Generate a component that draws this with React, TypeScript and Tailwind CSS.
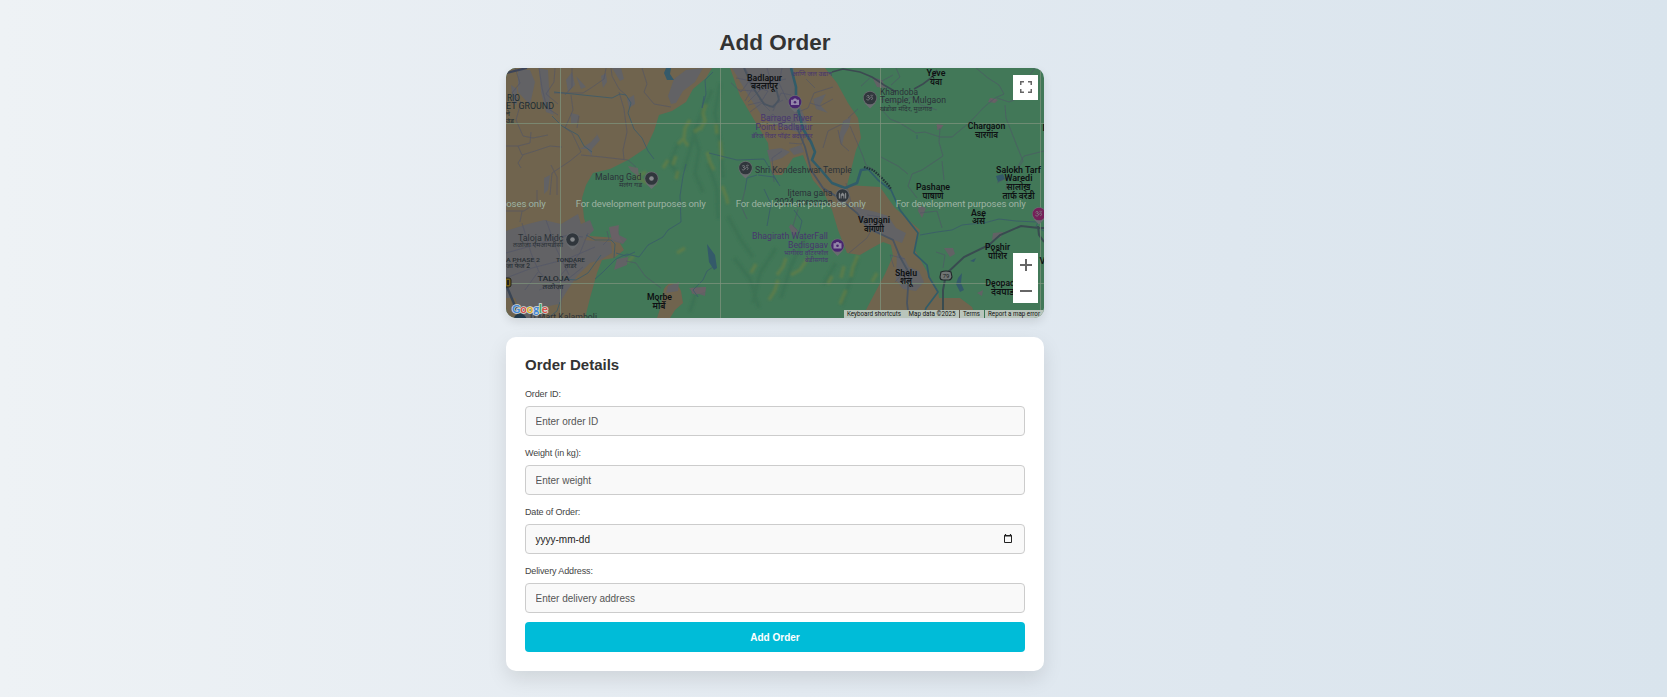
import React from "react";

type Anchor = "start" | "middle" | "end";
type Label = {
  x: number;
  y: number;
  text: string;
  w?: number;
  size?: number;
  anchor?: Anchor;
  kind?: "town" | "poi" | "purple" | "area" | "district";
};

const COLORS = {
  town: "#0e1113",
  poi: "#2b3238",
  purple: "#48366f",
  area: "#1c2c33",
  district: "#262e33",
};

const LABELS: Label[] = [
  { x: 1, y: 32.5, text: "RIO", w: 13, size: 8.6, anchor: "start", kind: "area" },
  { x: 0, y: 41, text: "ET GROUND", w: 48, size: 8.6, anchor: "start", kind: "area" },
  { x: 0, y: 48, text: "ने", size: 7, anchor: "start", kind: "area" },
  { x: 0, y: 55, text: "उंड", w: 8, size: 7, anchor: "start", kind: "area" },
  { x: 89, y: 112, text: "Malang Gad", w: 46.5, anchor: "start", kind: "poi" },
  { x: 113, y: 118.5, text: "मलंग गड", w: 23, size: 7, anchor: "start", kind: "poi" },
  { x: 258.5, y: 12.5, text: "Badlapur", w: 35, kind: "town" },
  { x: 258.5, y: 21, text: "बदलापूर", w: 27, size: 9, kind: "town" },
  { x: 286, y: 8, text: "आणि जल उद्यान", w: 40, size: 7, anchor: "start", kind: "purple" },
  { x: 306.5, y: 53, text: "Barrage River", w: 52, anchor: "end", kind: "purple" },
  { x: 306.5, y: 62, text: "Point Badlapur", w: 57, anchor: "end", kind: "purple" },
  { x: 306.5, y: 69.5, text: "बॅरेज रिवर पॉइंट बदलापूर", w: 61, size: 7, anchor: "end", kind: "purple" },
  { x: 249, y: 104.5, text: "Shri Kondeshwar Temple", w: 97, anchor: "start", kind: "poi" },
  { x: 281.5, y: 128, text: "Ijtema gaha", w: 45, anchor: "start", kind: "poi" },
  { x: 268.5, y: 136.5, text: "2024 goregaon", w: 58, anchor: "start", kind: "poi" },
  { x: 430, y: 8, text: "Yeve", w: 19, kind: "town" },
  { x: 430, y: 16.5, text: "येवा", w: 12, size: 9, kind: "town" },
  { x: 374, y: 26.5, text: "Khandoba", w: 38, anchor: "start", kind: "poi" },
  { x: 374, y: 35, text: "Temple, Mulgaon", w: 66, anchor: "start", kind: "poi" },
  { x: 374, y: 42.5, text: "खंडोबा मंदिर, मुळगाव", w: 52, size: 7, anchor: "start", kind: "poi" },
  { x: 480.5, y: 61, text: "Chargaon", w: 37.5, kind: "town" },
  { x: 480.5, y: 69.5, text: "चारगांव", w: 23, size: 9, kind: "town" },
  { x: 427, y: 122, text: "Pashane", w: 34, kind: "town" },
  { x: 427, y: 130.5, text: "पाषाणे", w: 21, size: 9, kind: "town" },
  { x: 512.5, y: 104.5, text: "Salokh Tarf", w: 45, kind: "town" },
  { x: 512.5, y: 113, text: "Waredi", w: 28, kind: "town" },
  { x: 512.5, y: 122, text: "सालोख", w: 24, size: 9, kind: "town" },
  { x: 512.5, y: 130.5, text: "तार्फ वरेडी", w: 32, size: 9, kind: "town" },
  { x: 472.5, y: 147.5, text: "Ase", w: 15, kind: "town" },
  { x: 472.5, y: 156, text: "असे", w: 13, size: 9, kind: "town" },
  { x: 368, y: 155, text: "Vangani", w: 32, kind: "town" },
  { x: 368, y: 163.5, text: "वांगणी", w: 20, size: 9, kind: "town" },
  { x: 491.5, y: 182, text: "Poshir", w: 25, kind: "town" },
  { x: 491.5, y: 190.5, text: "पोशिर", w: 19, size: 9, kind: "town" },
  { x: 400, y: 207.5, text: "Shelu", w: 22, kind: "town" },
  { x: 400, y: 216, text: "शेलू", w: 12, size: 9, kind: "town" },
  { x: 479.5, y: 218, text: "Deopada", w: 34, anchor: "start", kind: "town" },
  { x: 485, y: 226.5, text: "देवपाडा", w: 26, size: 9, anchor: "start", kind: "town" },
  { x: 536.5, y: 63, text: "D", anchor: "start", kind: "town" },
  { x: 533.5, y: 196, text: "V", anchor: "start", kind: "town" },
  { x: 322, y: 171, text: "Bhagirath WaterFall", w: 76, anchor: "end", kind: "purple" },
  { x: 322, y: 179.5, text: "Bedisgaav", w: 40, anchor: "end", kind: "purple" },
  { x: 322, y: 186.5, text: "भागीरथ वॉटरफॉल", w: 44, size: 7, anchor: "end", kind: "purple" },
  { x: 322, y: 193.5, text: "बेडीसगांव", w: 23, size: 7, anchor: "end", kind: "purple" },
  { x: 12, y: 172.5, text: "Taloja Midc", w: 45.5, anchor: "start", kind: "poi" },
  { x: 7, y: 179, text: "तळोजा एमआयडीसी", w: 50, size: 7, anchor: "start", kind: "poi" },
  { x: 0, y: 194, text: "A PHASE 2", w: 34, size: 6, anchor: "start", kind: "district" },
  { x: 0, y: 200, text: "जा फेज 2", w: 24, size: 6.5, anchor: "start", kind: "district" },
  { x: 64.5, y: 194, text: "TONDARE", w: 29, size: 6, kind: "district" },
  { x: 64.5, y: 200, text: "तोंडरे", w: 12, size: 6.5, kind: "district" },
  { x: 47.5, y: 213, text: "TALOJA", w: 32, size: 8, kind: "district" },
  { x: 47, y: 220.5, text: "तळोजा", w: 21, size: 7, kind: "district" },
  { x: 153.5, y: 232, text: "Morbe", w: 25, kind: "town" },
  { x: 153, y: 240.5, text: "मोर्बे", w: 13, size: 9, kind: "town" },
  { x: 24, y: 252, text: "D Mart Kalamboli", w: 67, anchor: "start", kind: "poi" },
];

function MapLabel({ x, y, text, w, size = 9, anchor = "middle", kind = "town" }: Label) {
  return (
    <text
      x={x}
      y={y}
      fontSize={size}
      textAnchor={anchor}
      fill={COLORS[kind]}
      fontWeight={kind === "town" ? 600 : kind === "district" ? 500 : 400}
      textLength={w}
      lengthAdjust="spacingAndGlyphs"
    >
      {text}
    </text>
  );
}

function Pin({ x, y, color, kind }: { x: number; y: number; color: string; kind: string }) {
  return (
    <g transform={`translate(${x} ${y})`}>
      <path d="M-5.6 5 L0 10.4 L5.6 5Z" fill="#696c70" />
      <circle r="7" fill="#696c70" />
      <circle r="6.3" fill={color} />
      {kind === "dot" && <circle r="2.3" fill="#85888b" />}
      {kind === "camera" && (
        <g>
          <path d="M-4 -2.3h2l1-1.2h2l1 1.2h2v5.3h-8z" fill="#9385a8" />
          <circle cy=".3" r="1.3" fill={color} />
        </g>
      )}
      {kind === "om" && (
        <path
          d="M-3.4-1.7c1-1.3 3-.8 2.5.4-.2.5-.8.7-1.3.7 1.2 0 2 .8 1.5 1.8-.7 1.2-2.5.8-3-.1M-.7.4c1 .4 1.2-1.4 2.4-1.2 1.4.3 1 2.6-.4 2.4M.5-2.7c.8.8 2 .8 2.7-.1M1.9-4.1v.4"
          fill="none"
          stroke="#7d8083"
          strokeWidth=".9"
        />
      )}
      {kind === "mosque" && (
        <path d="M-3.7 3v-5l.6-1 .6 1v5zM2.5 3v-5l.6-1 .6 1v5zM-1.9 3v-4l1.9-2 1.9 2v4h-1v-2l-.9-1-.9 1v2z" fill="#85888b" />
      )}
    </g>
  );
}

function Terrain() {
  return (
    <g>
      <rect width="538" height="250" fill="#427858" />
      <g filter="url(#soft)">
        <path
          d="M206 22l-9 20-7 17-7 26-5 17M187 62l6 20-4 24 8 18M172 75l-8 20 9 13M214 15l-5 30 6 35 2 30M202 95l9 26 1 30M222 148l12 23 13 18M228 190l16 21 9 29M270 180l-16 25-7 30M300 168l-15 30-10 32M352 190l-7 21-9 26M192 218l-8 26M330 195l-13 22"
          fill="none"
          stroke="#3a7052"
          strokeWidth="4"
          opacity=".65"
        />
        <path
          d="M200 36l-3 9 2 8-5 9M184 52l-5 8-1 10-6 6M178 72l4 6M188 64l6-4M170 88l-3 9M162 92l-5 8M210 56l1 10M214 73l2 18M201 84l3 10 4 8M172 103l-2 8M216 118l4 10 2 8M140 104l-9 5 8 5 12 1M280 190l-3 9-6 8M302 190l-8 12-9 5M272 212l-3 10-6 10M250 196l-5 9M352 187l-5 12-2 10M338 198l-3 12M340 222l-6 14M326 208l-4 8M371 205l-5 9M179 180l-8 5M128 188l-7 6M75 104l-7 11"
          fill="none"
          stroke="#637e46"
          strokeWidth="3.4"
          opacity=".75"
        />
      </g>
      <path
        d="M0 0H206L200 10 187 21 180 34 166 43 153 47 148 63 140 80 122 92 104 101 87 105 80 117 76 130 78 150 84 168 111 170 118 182 108 190 96 192 91 205 84 230 79 250H0Z"
        fill="#70644e"
      />
      <path
        d="M224 0H319L331 15 342 35 352 50 355 70 350 82 345 102 341 117 374 119 389 140 414 162 409 182 420 202 432 222 433 230 454 230 466 239 470 250H356L362 238 379 206 387 188 385 177 377 174 366 180 354 187 341 185 332 162 326 142 318 125 307 112 297 87 287 90 276 107 266 107 262 75 247 50 234 28Z"
        fill="#70644e"
      />
      <path d="M158 221c6-10 14-6 17 2l2 12-8 7-5 8h-13l4-12Z" fill="#70644e" />
      <g fill="#626265">
        <path d="M226 0h62l1 27 8 18 5 14-8 6-17-6-13-4-8-7-14-21Z" />
        <path d="M0 163l22-7 16-4 17 4 17-10 3 10 9-4 4 10-10 10 27 2 1 11-12 7-10 3-13 13-10 15-8 13-15 3-4 24H22L9 230H0Z" />
        <path d="M103 160l9-2 1 9 8 4-4 5-11-3Z" />
        <path d="M12 2l12 0 5 12-5 23-12-13ZM33 0l9 2 2 35 4 10-8-3-5-20ZM165 36l-3-8 6-17 12-9 17-2-8 14-12 9-7 12ZM85 74l6-7-1-3 4 8-8 9 0 7-5-7-7 0ZM95 8l5-3 1 9-4 6ZM106 0h9l3 11-4 2ZM70 8l10 11-5 2ZM60 12l6-8 3 13-7 7ZM65 45l8 2-2 8-6 1ZM121 31l7-4 1 9-6 4ZM38 110l6-3-2 15-4 4ZM5 17l6 4 0 16-4-2Z" />
        <path d="M347 137l10 4 13 3 12 4 8 12 10 5-4 10-13-5-16-6-10-9ZM391 184l8 7 4 8 10 4 5 11-8 9-13-2-7-9ZM261 82l14-2 9 4-8 6-12 4ZM307 31l13-5-6 11 8 8-12-4ZM337 53l8-4-2 10-5 9-2 9-3-9ZM283 81l12-4 3 7-10 3ZM285 156l7 6-4 7-5-10Z" />
        <path d="M366 9l10 3 4 8-9-1ZM484 30l8 2-3 3-7-1ZM431 56l6 1-2 4-4 1ZM438 180l9 0 2 6-5 3ZM487 165l10-1-2 5-9 3ZM413 137l7 3-4 10-4-7ZM185 220l15-1-1 9-9-3-4 1ZM111 191l11-2-1 8-13 5ZM162 218l11-4-1 9-12 2ZM471 225l6-3-1 6Z" />
      </g>
      <g fill="#6b6266" opacity=".8">
        <path d="M103 159l10-2-1 9 5 9-11-4ZM122 98l10 2 1 9-8-6ZM183 220l17-1-1 5-10 3ZM484 30l7 1-3 4ZM430 57l8 0-5 4Z" />
      </g>
      <path d="M160 0l5 0-1 6 4 6-7 0-3-7ZM490 108l7-2 2 5-7 3ZM464 193l6-3-2 4ZM452 210l4-5-1 10 3 7-4 2-4-8ZM201 176l8 11 2 13-3 2-5-8Z" fill="#345a6a" />
      <g fill="none" stroke="#505468" strokeWidth=".7" opacity=".85">
        <path d="M9 0l5 15-8 10 9 9-5 18 7 16 10 2 15-3M33 0l3 20 5 20 11 7M49 0l-1 14-8 12 12 10M48 25l29 0 8-5 13-9 2-11M66 0v19l-7 8M105 0l1 8 7 13 7 6M113 24l5 17 3 23-4 18 1 9M136 0l5 16-3 8 10 12 17 3M0 78l12 0 12-3 1-11M12 78l4 9 13-4 15-5 12 1M65 27l2 15-8 18 7 5 9 19-11 9-18 12-2 22M75 87l21 2 26 3 8 7M17 87l-5 8 3 5M45 97l6 12 0 18M0 143l18 0 13-9 0-12M16 143l-2 11M71 60l2-12" />
        <path d="M0 185l32-9 30-9 15 2M16 155l9 30 8 19 20 18M40 152l10 28 13 27M0 210l26-10 35-9 28-12M19 222l13-18M33 222l29-11 15-12M82 165l-8 20-20 23M54 250l2-33M97 177l6-6-2-8" />
        <path d="M225 15l10 9 8-11 11 9-12 12M239 0l9 18-9 15M248 18l14 5-7 11-13 3M261 0l4 14-13 10M265 14l15-3M253 31l11 8 13-7M267 43l8-18 10 2M276 0l-3 15 8 17M290 45l12-5 6-15 19-6M304 35l10 3 13-7M300 11l9 9M283 75l13 1 4-14M338 55l-16 8-5 17M342 50l10-9M344 58l12 28 4 11 8 5M276 83l-10 7 2 24M332 62l3 14 8 7M230 10l16 3 10-8M232 22l17 1M244 44l12-9 8 8M256 55l11-9 9 10 14-3" />
        <path d="M355 18l10-9 11 4 11-6M373 31l22 3 10-5 10 8 16 5M390 0l4 9-9 8M470 0l12 10 11 7 5 9-9 4-12 10-9 10-10 9-12 10-12 0-15-5-9 1-16-10-10-4-7-8M491 30l12 4 17-7 3-19 6-8M499 37l1 13 9 23 8 20-6 9M509 103l9-15 20-5M434 60l-1 14 4 14-21 14-10 4-4 12 9 12M436 93l2 19M375 89l17 9 10 8M414 145l17-2 5 17M491 115l11-6-2 13" />
        <path d="M368 157l-7 13-18 15M381 150l-20-3M399 191l-15-4 4 12M402 200l-13 14M340 115l6 23M430 184l9 3-2 13M120 193l10 2 9 13 16 12M239 122l-4 16 6 13M292 141l-5 17 7 7" />
      </g>
      <path d="M326 4l11-3 17 3 12 5 12 8 12 7M431 2l-6 8-8 6-9 5" fill="none" stroke="#3c4a51" strokeWidth="1.6" />
      <g fill="none" stroke="#3a5b6b" strokeWidth=".8">
        <path d="M48 24l19 2 39 4 8-4 6 1 5 8-3 10 6 16 8 9 6 13 6 8M46 48l10 10 16 9 6 11 8 6" />
        <path d="M180 96l-3 12-3 20 1 26-13 8-5 7-15 8-9 12-12-3-11 5-14 14-7 6M198 28l-2 12 4-14-1-14 8-8M203 85l28 7 27-1 6 10 8 14M252 107l16 2 6 9M239 122l2-12 10-3M258 121l7 15-4 22M288 142l8 11-3 12M80 167l9 5 16 0 4 4-1 14M58 211l12 1 12-7 13-18M110 185l10 3 9-4M414 167l17-3 15-2 10-5 9-1 13-1 15-4 17 2 21 1M54 234l-3 9-9 7M207 199l-6 4-4 9-10 10 5 7M534 148l-4 11 8 4M411 67l0 4" />
      </g>
      <path
        d="M285 0l5 19v14l7 28 8 13 4 10-3 8 9 10 11 13 13 5 12-5 4-13 7-1"
        fill="none"
        stroke="#315c69"
        strokeWidth="2.6"
        strokeLinejoin="round"
      />
      <path
        d="M362 101l10 11 13 10 9 20 18 23-4 20 13 12 2 12 9 15-12 16-3 10"
        fill="none"
        stroke="#315c69"
        strokeWidth="1.7"
        strokeLinejoin="round"
      />
      <path d="M238 0l8 18 12 18 9 3 6-7-3-12M290 57l9 22 6 23 12 18 16 10 18 15 11 15 25 12 7 17 9 16-2 30 2 15" fill="none" stroke="#4a5460" strokeWidth="1.8" />
      <path d="M0 5L21 0" stroke="#3c4458" strokeWidth="2.2" />
      <path d="M1 219L14 250" stroke="#3a4554" strokeWidth="2.4" />
      <path d="M437 250l0-28 3-16 18-17 25-12 11-10 21-9 18 2 5 0M532 158l1 9 5 7" fill="none" stroke="#394b50" strokeWidth="2" />
      <path d="M358 99l9 3 8 7 8 9 2 3" fill="none" stroke="#22343a" strokeWidth="2.2" strokeDasharray="1.6 1" />
    </g>
  );
}

function MapCanvas() {
  return (
    <svg className="block h-[250px] w-[538px]" viewBox="0 0 538 250" fontFamily="Roboto, 'Noto Sans', sans-serif">
      <defs>
        <filter id="soft">
          <feGaussianBlur stdDeviation="1.1" />
        </filter>
      </defs>
      <Terrain />
      <g fill="none" stroke="#7d937c" strokeWidth="1" opacity=".75">
        <path d="M54.5 0V250M214.5 0V250M374.5 0V250M534.5 0V250M0 55.5H538M0 215.5H538" />
      </g>
      {LABELS.map((l) => (
        <MapLabel key={l.text + l.x + l.y} {...l} />
      ))}
      <Pin x={145.5} y={110.5} color="#30363c" kind="dot" />
      <Pin x={66.5} y={171.5} color="#30363c" kind="dot" />
      <Pin x={289} y={34} color="#49256f" kind="camera" />
      <Pin x={331.5} y={177.5} color="#49256f" kind="camera" />
      <Pin x={239.5} y={100} color="#30363c" kind="om" />
      <Pin x={364} y={30} color="#30363c" kind="om" />
      <Pin x={336.5} y={127.5} color="#30363c" kind="mosque" />
      <Pin x={533} y={146} color="#752058" kind="om" />
      <circle cx="14" cy="252" r="6.5" fill="#21394b" />
      <rect x="-3" y="210" width="8" height="9" rx="2" fill="#735d17" stroke="#23251f" />
      <rect x="1" y="212" width="2" height="5" fill="#202020" />
      <path d="M435 204q5-2 10 0l1 5q-1 3-3 3h-6q-3 0-3-3z" fill="#6f7474" stroke="#20272a" strokeWidth="1.1" />
      <text x="440" y="210.3" fontSize="6" textAnchor="middle" fill="#191d20">79</text>
      <g fill="#9db3a2" fontSize="9.6">
        <text x="-90.3" y="139" textLength="130">For development purposes only</text>
        <text x="69.7" y="139" textLength="130">For development purposes only</text>
        <text x="229.7" y="139" textLength="130">For development purposes only</text>
        <text x="389.7" y="139" textLength="130">For development purposes only</text>
      </g>
      <text
        x="6"
        y="245.2"
        fontSize="11.5"
        fontFamily="Lato, sans-serif"
        fontWeight="700"
        textLength="36"
        stroke="#d3dad8"
        strokeWidth="1.6"
        paintOrder="stroke"
      >
        <tspan fill="#4285d4">G</tspan>
        <tspan fill="#d85047">o</tspan>
        <tspan fill="#e0b020">o</tspan>
        <tspan fill="#4285d4">g</tspan>
        <tspan fill="#3fa35a">l</tspan>
        <tspan fill="#d85047">e</tspan>
      </text>
      <rect x="338" y="242" width="200" height="8" fill="#b9c5bc" />
      <g fill="#111" fontSize="6.4">
        <text x="341" y="248.2" textLength="54" lengthAdjust="spacingAndGlyphs">Keyboard shortcuts</text>
        <text x="402.5" y="248.2" textLength="47" lengthAdjust="spacingAndGlyphs">Map data ©2025</text>
        <text x="457" y="248.2" textLength="17" lengthAdjust="spacingAndGlyphs">Terms</text>
        <text x="482" y="248.2" textLength="52" lengthAdjust="spacingAndGlyphs">Report a map error</text>
      </g>
      <path d="M453.5 242v8" stroke="#665c4c" />
      <path d="M478.5 242v8" stroke="#397553" />
    </svg>
  );
}

function MapPanel() {
  return (
    <div className="relative h-[250px] w-[538px] overflow-hidden rounded-[10px] shadow-[0_4px_10px_rgba(0,0,0,0.1)]">
      <MapCanvas />
      <button className="absolute top-[7px] right-[6px] flex h-[25px] w-[25px] items-center justify-center bg-white pb-px" aria-label="Toggle fullscreen view">
        <svg width="12" height="12" viewBox="0 0 12 12" fill="none" stroke="#666" strokeWidth="1.5">
          <path d="M.75 4V.75H4M8 .75h3.25V4M11.25 8v3.25H8M4 11.25H.75V8" />
        </svg>
      </button>
      <div className="absolute right-[6px] bottom-[15px] flex h-[50px] w-[25px] flex-col bg-white">
        <button className="flex flex-1 items-center justify-center pb-px" aria-label="Zoom in">
          <svg width="12" height="12" viewBox="0 0 12 12" stroke="#666" strokeWidth="2">
            <path d="M6 0v12M0 6h12" />
          </svg>
        </button>
        <button className="flex flex-1 items-center justify-center" aria-label="Zoom out">
          <svg width="12" height="12" viewBox="0 0 12 12" stroke="#666" strokeWidth="2">
            <path d="M0 6h12" />
          </svg>
        </button>
      </div>
    </div>
  );
}

function Field({ label, placeholder }: { label: string; placeholder?: string }) {
  return (
    <label className="flex flex-col">
      <span className="h-[17px] text-[9px] leading-[10px] tracking-[-0.13px] text-[#444]">{label}</span>
      {placeholder ? (
        <input
          className="h-[30px] w-full rounded-[4px] border border-[#ccc] bg-[#f9f9f9] px-[9.5px] pt-px text-[10px] outline-none placeholder:text-[#555]"
          placeholder={placeholder}
        />
      ) : (
        <span className="flex h-[30px] items-center justify-between rounded-[4px] border border-[#ccc] bg-[#f9f9f9] pr-3 pl-[9.5px] text-[10px] text-[#222]">
          <span className="pt-px">yyyy-mm-dd</span>
          <svg className="mb-0.5" width="8" height="9" viewBox="0 0 8 9" fill="none" stroke="#222">
            <path d="M.5 1.5h7v7h-7z" />
            <path d="M0 2h8M1.5 0v1.5M6.5 0v1.5" strokeWidth="1.2" />
          </svg>
        </span>
      )}
    </label>
  );
}

export default function App() {
  return (
    <main className="flex h-[697px] w-[1667px] flex-col overflow-hidden bg-[linear-gradient(90deg,#eef2f5_0%,#e3eaf1_48%,#d9e4ed_100%)] pl-[506px] font-['Liberation_Sans',Arial,sans-serif]">
      <div className="flex w-[538px] flex-col">
        <h1 className="flex h-[68px] items-start justify-center pt-[30px] text-[22.5px] leading-[26px] font-bold text-[#333]">Add Order</h1>
        <MapPanel />
        <form className="mt-[19px] h-[334px] rounded-[10px] bg-white px-[19px] pt-[19px] shadow-[0_8px_20px_rgba(0,0,0,0.1)]">
          <h2 className="h-[33px] text-[15px] leading-[18px] font-bold text-[#333]">Order Details</h2>
          <div className="flex flex-col gap-3">
            <Field label="Order ID:" placeholder="Enter order ID" />
            <Field label="Weight (in kg):" placeholder="Enter weight" />
            <Field label="Date of Order:" />
            <Field label="Delivery Address:" placeholder="Enter delivery address" />
          </div>
          <button type="button" className="mt-[9px] h-[30px] w-full rounded-[4px] bg-[#00bcd8] text-[10px] font-bold text-white">
            Add Order
          </button>
        </form>
      </div>
    </main>
  );
}
